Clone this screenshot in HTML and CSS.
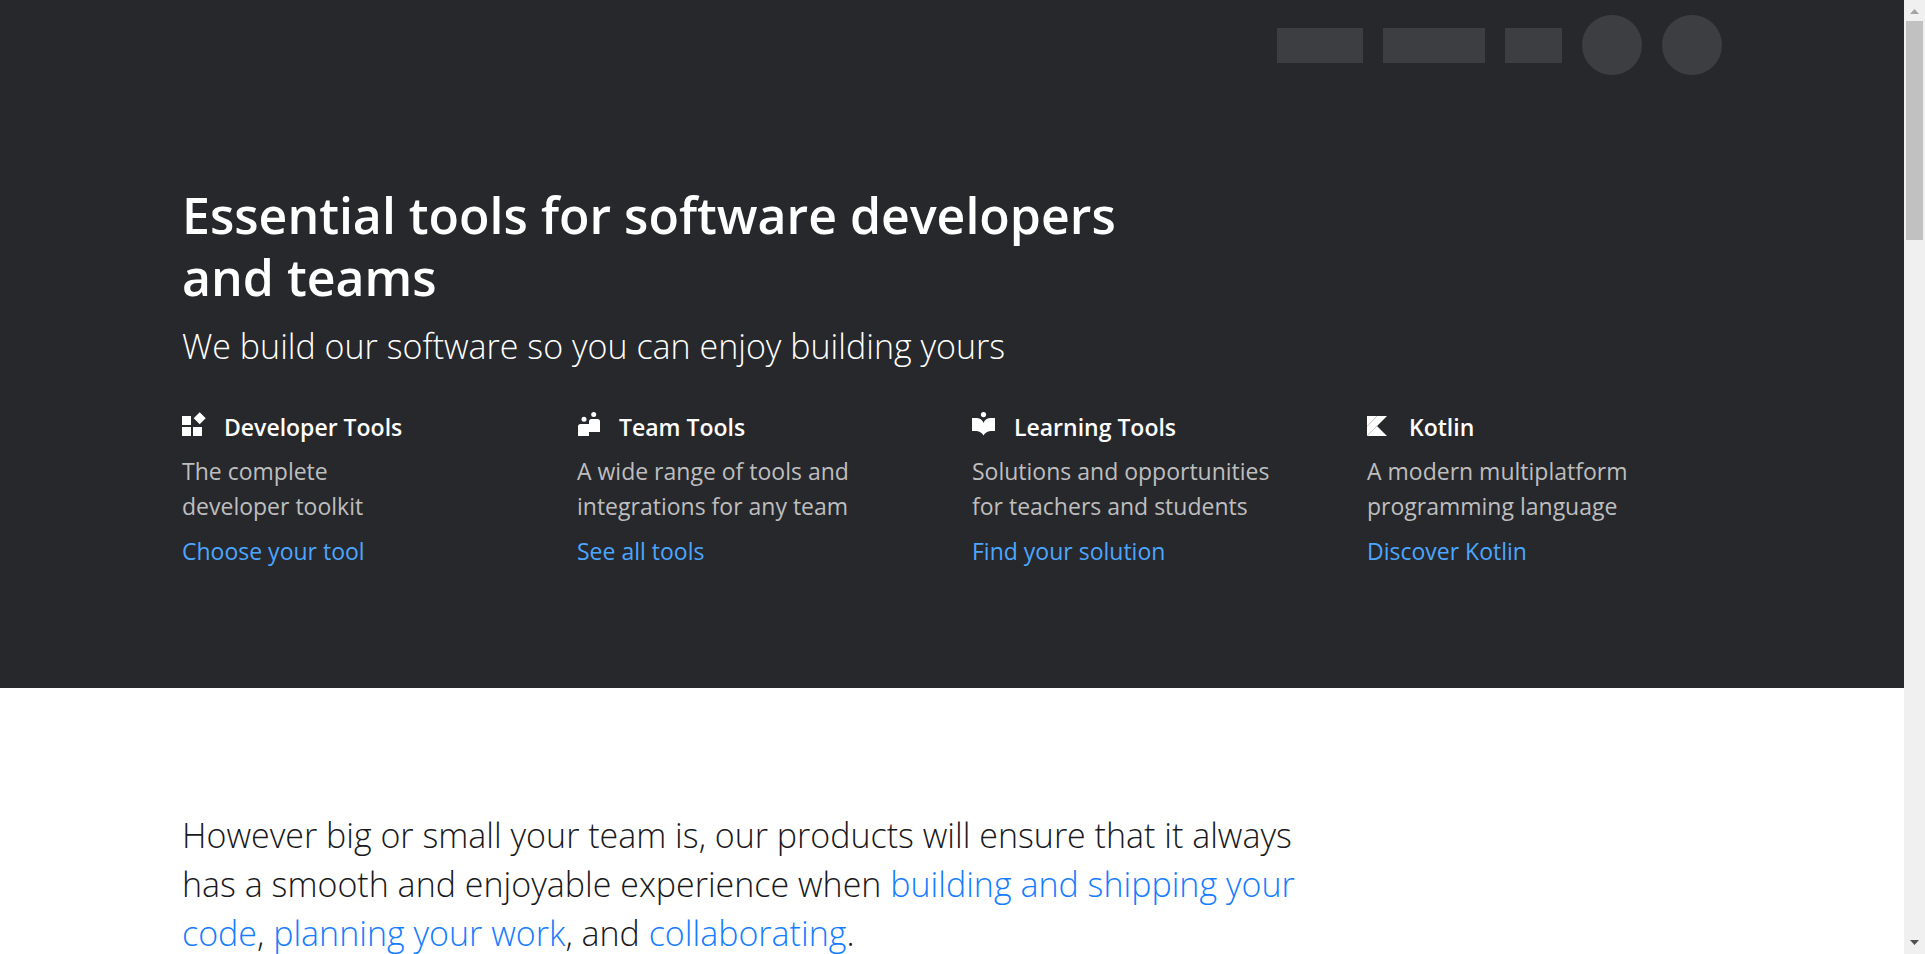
FILE: index.html
```html
<!DOCTYPE html>
<html lang="en">
<head>
<meta charset="utf-8">
<title>Essential tools for software developers and teams</title>
<link rel="stylesheet" href="styles.css">
</head>
<body>
<div class="viewport">
  <div class="page">
    <div class="hero">
      <header class="container topbar">
        <span class="skeleton skeleton-medium"></span>
        <span class="skeleton skeleton-wide"></span>
        <span class="skeleton skeleton-narrow"></span>
        <span class="skeleton skeleton-round"></span>
        <span class="skeleton skeleton-round"></span>
      </header>
      <section class="container intro">
        <h1 class="headline">Essential tools for software developers<br>and teams</h1>
        <p class="tagline">We build our software so you can enjoy building yours</p>
        <div class="features">
          <article class="feature">
            <h2 class="feature-title">
              <svg class="feature-icon" viewBox="0 0 24 24" aria-hidden="true"><path d="M0 4h9v9H0zM0 15h9v9H0zM11 15h9v9h-9zM17.700 0.300l6 6-6 6-6-6z"/></svg>
              Developer Tools
            </h2>
            <p class="feature-text">The complete<br>developer toolkit</p>
            <a class="feature-link" href="#tools">Choose your tool</a>
          </article>
          <article class="feature">
            <h2 class="feature-title">
              <svg class="feature-icon" viewBox="0 0 24 24" aria-hidden="true"><circle cx="7" cy="7.300" r="2.500"/><circle cx="16.700" cy="2.500" r="2.500"/><path d="M1 24V14.500Q1 12 3.500 12H12V9.500Q12 7 14.500 7H20.500Q23 7 23 9.500V20H12V24z"/></svg>
              Team Tools
            </h2>
            <p class="feature-text">A wide range of tools and<br>integrations for any team</p>
            <a class="feature-link" href="#team">See all tools</a>
          </article>
          <article class="feature">
            <h2 class="feature-title">
              <svg class="feature-icon" viewBox="0 0 24 24" aria-hidden="true"><circle cx="11.500" cy="2.600" r="2.600"/><path d="M0 6H5Q10 6.500 11.500 11Q13 6.500 18 6H23V19H18.500Q13.500 19.500 11.500 23.500Q9.500 19.500 4.500 19H0z"/></svg>
              Learning Tools
            </h2>
            <p class="feature-text">Solutions and opportunities<br>for teachers and students</p>
            <a class="feature-link" href="#learning">Find your solution</a>
          </article>
          <article class="feature">
            <h2 class="feature-title">
              <svg class="feature-icon" viewBox="0 0 24 24" aria-hidden="true"><path d="M0 4H20L10 14L20 24H0z"/><path class="icon-seam" d="M0 14.500L10 4M0 24L10 14"/></svg>
              Kotlin
            </h2>
            <p class="feature-text">A modern multiplatform<br>programming language</p>
            <a class="feature-link" href="#kotlin">Discover Kotlin</a>
          </article>
        </div>
      </section>
    </div>
    <main class="container">
      <p class="summary">However big or small your team is, our products will ensure that it always<br>has a smooth and enjoyable experience when <a href="#build">building and shipping your<br>code</a>, <a href="#plan">planning your work</a>, and <a href="#collaborate">collaborating</a>.</p>
    </main>
  </div>
  <div class="scrollbar" aria-hidden="true">
    <svg class="scroll-arrow arrow-up" viewBox="0 0 21 21"><path d="M6 14L10.500 9L15 14z"/></svg>
    <div class="scroll-track"><div class="scroll-thumb"></div></div>
    <svg class="scroll-arrow" viewBox="0 0 21 21"><path d="M6 7L10.500 12L15 7z"/></svg>
  </div>
</div>
</body>
</html>
```
FILE: styles.css
```css
* {
  box-sizing: border-box;
}

body {
  margin: 0;
  background: #fff;
  color: #19191c;
  font-family: "Open Sans", "Noto Sans", sans-serif;
}

h1, h2, p {
  margin: 0;
}

a {
  text-decoration: none;
}

.viewport {
  display: flex;
  height: 100vh;
  overflow: hidden;
}

.page {
  flex: 1;
  min-width: 0;
}

.container {
  max-width: 1588px;
  margin: 0 auto;
  padding: 0 24px;
}

.hero {
  background: #27282c;
  color: #fff;
  padding-bottom: 119px;
}

.topbar {
  display: flex;
  align-items: center;
  justify-content: flex-end;
  gap: 20px;
  min-height: 90px;
}

.skeleton {
  height: 35px;
  background: #3d3e42;
}

.skeleton-medium {
  width: 86px;
}

.skeleton-wide {
  width: 102px;
}

.skeleton-narrow {
  width: 57px;
}

.skeleton-round {
  width: 60px;
  height: 60px;
  border-radius: 50%;
}

.intro {
  padding-top: 94px;
}

.headline {
  font-size: 50px;
  line-height: 62px;
  font-weight: 600;
}

.tagline {
  margin-top: 13px;
  font-size: 34px;
  line-height: 50px;
  font-weight: 300;
}

.features {
  display: grid;
  grid-template-columns: repeat(4, 1fr);
  gap: 40px;
  margin-top: 39px;
  font-size: 23px;
  line-height: 35px;
}

.feature-title {
  display: flex;
  gap: 18px;
  font-size: 23px;
  line-height: 35px;
  font-weight: 600;
}

.feature-icon {
  flex: none;
  width: 24px;
  height: 24px;
  margin-top: 2px;
  fill: #fff;
}

.icon-seam {
  fill: none;
  stroke: #c4c4c6;
  stroke-width: 1;
}

.feature-text {
  margin: 9px 0 10px;
  color: #bebebf;
}

.feature-link {
  color: #4ca6ff;
}

.summary {
  padding-top: 123px;
  font-size: 34px;
  line-height: 49px;
  font-weight: 300;
}

.summary a {
  color: #167dff;
}

.scrollbar {
  display: flex;
  flex-direction: column;
  width: 21px;
  background: #f0f0f0;
}

.scroll-arrow {
  flex: none;
  width: 21px;
  height: 21px;
  fill: #505050;
}

.arrow-up {
  fill: #a3a3a3;
}

.scroll-track {
  flex: 1;
  padding: 0 2px;
}

.scroll-thumb {
  height: 24%;
  background: #c1c1c1;
}
```
